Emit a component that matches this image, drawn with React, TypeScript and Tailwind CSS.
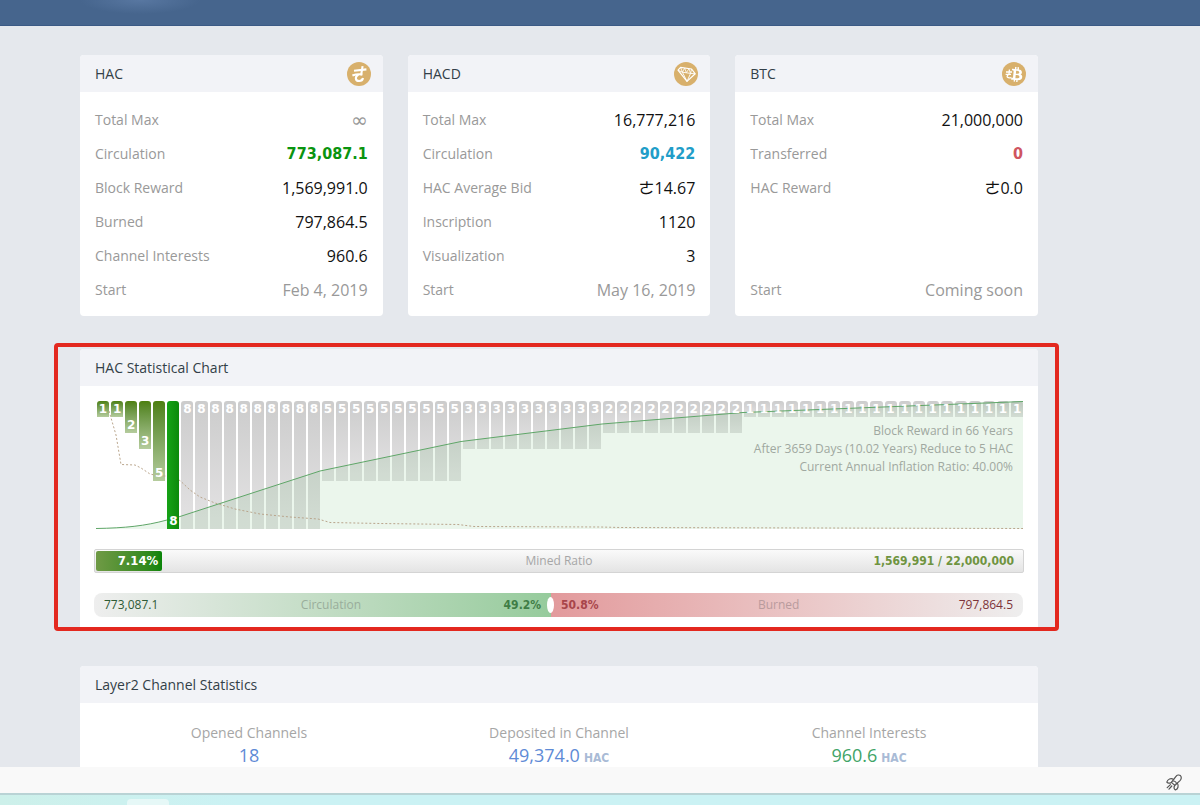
import type { ReactNode } from "react";
import clsx from "clsx";
import { FaBtc } from "react-icons/fa";

type Row = { label: string; value: string; tone?: string } | null;

const muted = "text-[#999999]";

const hacRows: Row[] = [
  { label: "Total Max", value: "∞", tone: "text-[#999999] font-['DejaVu_Sans',sans-serif] text-xl" },
  { label: "Circulation", value: "773,087.1", tone: "font-bold text-[#0a940f]" },
  { label: "Block Reward", value: "1,569,991.0" },
  { label: "Burned", value: "797,864.5" },
  { label: "Channel Interests", value: "960.6" },
  { label: "Start", value: "Feb 4, 2019", tone: muted },
];

const hacdRows: Row[] = [
  { label: "Total Max", value: "16,777,216" },
  { label: "Circulation", value: "90,422", tone: "font-bold text-[#219dc8]" },
  { label: "HAC Average Bid", value: "ㄜ14.67" },
  { label: "Inscription", value: "1120" },
  { label: "Visualization", value: "3" },
  { label: "Start", value: "May 16, 2019", tone: muted },
];

const btcRows: Row[] = [
  { label: "Total Max", value: "21,000,000" },
  { label: "Transferred", value: "0", tone: "font-bold text-[#cf5560]" },
  { label: "HAC Reward", value: "ㄜ0.0" },
  null,
  null,
  { label: "Start", value: "Coming soon", tone: muted },
];

// block reward per year, 66 years
const rewards: number[] = [
  1, 1, 2, 3, 5, 8,
  ...Array(10).fill(8),
  ...Array(10).fill(5),
  ...Array(10).fill(3),
  ...Array(10).fill(2),
  ...Array(20).fill(1),
];
const currentYear = 5;

function HacIcon() {
  return (
    <svg viewBox="0 0 24 24" className="size-6" aria-hidden="true">
      <circle cx="12" cy="12" r="12" fill="#d8b06c" />
      <g fill="none" stroke="#fff" strokeWidth="2.1">
        <path d="M7 8.8 L19.4 7.4" />
        <path d="M15.6 4.2 L14.2 12.6" />
        <path d="M5.4 13.6 C8.5 12.4 12 12 15.4 12.6" />
        <path d="M11.4 12.6 C7.4 15 8.4 19 12.2 19 C14.2 19 15.6 18 16 16" />
      </g>
    </svg>
  );
}

function HacdIcon() {
  return (
    <svg viewBox="0 0 24 24" className="size-6" aria-hidden="true">
      <circle cx="12" cy="12" r="12" fill="#d8b06c" />
      <g fill="none" stroke="#fff" strokeWidth="1.2" strokeLinejoin="round">
        <path d="M4 8.2 L6.6 5.4 L17.6 7 L21.2 11.8 L13 19.4 Z" />
        <path d="M4 8.2 L8.4 10.2 L16.6 11.4 L21.2 11.8" strokeWidth="0.9" />
        <path d="M8.4 10.2 L13 19.4 L16.6 11.4" strokeWidth="0.9" />
        <path d="M6.6 5.4 L8.4 10.2 L10.6 6.2 L12.4 10.6 L15 6.8 L16.6 11.4 L17.6 7" strokeWidth="0.8" />
      </g>
    </svg>
  );
}

function BtcIcon() {
  return (
    <span className="relative flex size-6 items-center justify-end rounded-full bg-[#d8b06c] pr-[3px] text-white" aria-hidden="true">
      <FaBtc className="h-[15px] w-3 rotate-6" />
      <svg viewBox="0 0 8 10" className="absolute top-[7px] left-[3px] h-[10px] w-2" fill="none" stroke="#fff" strokeWidth="1.3">
        <path d="M1 3 H7 M4.4 0.5 L4 5 M0.6 5.4 H6 M3.4 5.4 C0.6 8 3 9.6 6.4 8.6" />
      </svg>
    </span>
  );
}

function RocketIcon() {
  return (
    <svg viewBox="0 0 16 17" className="h-[17px] w-4" fill="none" stroke="#555" strokeWidth="1.2" strokeLinecap="round" strokeLinejoin="round" aria-hidden="true">
      <path d="M5.4 8.4 L9.8 2.6 C11 1 13.2 0.8 14.4 1.6 C15.6 2.8 15.6 5 14 6.6 L8.8 11.4 Z" />
      <path d="M7.6 5.4 C5 3.8 1.6 5 0.8 8.2 C2 9.6 4 9.2 5.4 8.4" />
      <path d="M11.4 9.2 C13 12 12 15 9.4 16 C8 15 7.8 13 8.8 11.4" />
      <path d="M7.4 7 C9 7 10.4 8.4 10.4 9.8" />
      <path d="M4.4 10.6 L1.2 13.6 M5.8 12 L3 15.2" />
    </svg>
  );
}

function CardHeader({ title, icon }: { title: string; icon?: ReactNode }) {
  return (
    <header className="flex h-[37px] items-center justify-between bg-[#f2f3f7] pt-px pr-3 pl-[15px]">
      <h2 className="text-sm text-[#333f48]">{title}</h2>
      {icon}
    </header>
  );
}

function StatCard({ title, icon, rows }: { title: string; icon: ReactNode; rows: Row[] }) {
  return (
    <section className="overflow-hidden rounded-sm bg-white">
      <CardHeader title={title} icon={icon} />
      <dl className="px-[15px] py-[10px]">
        {rows.map((row, i) => (
          <div key={i} className="flex h-[34px] items-center justify-between pt-px">
            {row && (
              <>
                <dt className="text-sm text-[#999999]">{row.label}</dt>
                <dd
                  className={clsx(
                    !row.tone?.includes("text-xl") && "text-base",
                    row.tone ?? "text-[#111111]",
                    row.tone?.includes("font-bold") && "font-['DejaVu_Sans_Condensed','DejaVu_Sans',sans-serif]",
                  )}
                >
                  {row.value}
                </dd>
              </>
            )}
          </div>
        ))}
      </dl>
    </section>
  );
}

function RewardChart() {
  return (
    <div className="relative h-32">
      <div className="flex h-full items-start">
        {rewards.map((reward, i) => {
          const current = i === currentYear;
          const past = i < currentYear;
          return (
            <div key={i} className="h-full flex-1 pl-[2px]">
              <div
                className={clsx(
                  "flex justify-center rounded-t-[3px] pt-px",
                  past && "items-end bg-linear-to-b from-[#4d800d] to-[#b5cc9d]",
                  current && "relative z-10 items-end bg-linear-to-r from-[#17a317] to-[#0c8a0c]",
                  !past && !current && "bg-linear-to-b from-[#cccccc] to-[#e4e3e4]",
                )}
                style={{ height: `${(reward / 8) * 100}%` }}
              >
                <span className="relative z-10 font-['DejaVu_Sans',sans-serif] text-xs leading-[15px] font-bold text-white">
                  {reward}
                </span>
              </div>
            </div>
          );
        })}
      </div>
      <svg viewBox="0 0 928 128" preserveAspectRatio="none" className="absolute inset-0 size-full" aria-hidden="true">
        <path
          d="M1 127.5 C30 127 50 125 72 119 L85 115.5 L225 70 L366 40.5 L507 23 L648 11.5 L928 0.5 V128 H1 Z"
          fill="#3aa544"
          fillOpacity="0.1"
        />
        <path
          d="M1 127.5 C30 127 50 125 72 119 L85 115.5 L225 70 L366 40.5 L507 23 L648 11.5 L928 0.5"
          fill="none"
          stroke="#5fa668"
        />
        <path
          d="M14 10 L21 34 L26 63.5 L40 64 L46 67 L55 73 L64 75 L72 75 L85 79.5 L95 89 L105 96 L120 102 L140 108 L165 113 L195 116 L223 118 L235 121.5 L285 122.5 L363 123.5 L379 125.5 L505 126 L525 126.5 L928 127.5"
          fill="none"
          stroke="#b9a58c"
          strokeDasharray="2 2"
        />
      </svg>
      <div className="absolute top-[21px] right-[10px] z-10 text-right text-xs leading-[18px] text-[#a0a8a0]">
        <p>Block Reward in 66 Years</p>
        <p>After 3659 Days (10.02 Years) Reduce to 5 HAC</p>
        <p>Current Annual Inflation Ratio: 40.00%</p>
      </div>
    </div>
  );
}

function MinedBar() {
  return (
    <div className="relative -mx-px mt-5 flex h-6 items-center justify-end rounded-xs border border-[#d4d4d4] bg-linear-to-b from-[#fafafa] to-[#e4e4e4] px-[9px] text-xs">
      <div className="absolute inset-y-px left-px flex w-[7.14%] items-center justify-end rounded-xs bg-linear-to-r from-[#6f9a45] to-[#088408] pr-1 font-['DejaVu_Sans_Condensed','DejaVu_Sans',sans-serif] text-[13px] font-bold text-white">
        7.14%
      </div>
      <span className="absolute inset-x-0 text-center text-[#a6a6a6]">Mined Ratio</span>
      <span className="font-['DejaVu_Sans_Condensed','DejaVu_Sans',sans-serif] font-bold text-[#6f9440]">
        1,569,991 / 22,000,000
      </span>
    </div>
  );
}

function SupplyBar() {
  return (
    <div className="mt-5 -ml-px flex h-6 overflow-hidden rounded-lg text-xs">
      <div className="relative flex w-[49.2%] items-center justify-between bg-linear-to-r from-[#eeeeee] to-[#96cb9c] px-[10px]">
        <span className="text-[#2e5a35]">773,087.1</span>
        <span className="text-[#99ad9b]">Circulation</span>
        <strong className="font-['DejaVu_Sans_Condensed','DejaVu_Sans',sans-serif] text-[#3f7d46]">49.2%</strong>
        <i className="absolute top-1 -right-[3px] z-10 h-4 w-[7px] rounded-[50%] bg-white" />
      </div>
      <div className="flex flex-1 items-center justify-between bg-linear-to-r from-[#e29a9c] to-[#eeeeee] px-[10px]">
        <strong className="font-['DejaVu_Sans_Condensed','DejaVu_Sans',sans-serif] text-[#a8454a]">50.8%</strong>
        <span className="text-[#b99b9d]">Burned</span>
        <span className="text-[#7d3338]">797,864.5</span>
      </div>
    </div>
  );
}

function ChannelStat({ label, value, unit, tone }: { label: string; value: string; unit?: string; tone: string }) {
  return (
    <div className="text-center">
      <dt className="text-sm leading-6 text-[#a6a6a6]">{label}</dt>
      <dd className={clsx("text-lg leading-5", tone)}>
        {value}
        {unit && (
          <small className="ml-1 font-['DejaVu_Sans_Condensed','DejaVu_Sans',sans-serif] text-xs font-bold text-[#a9bbd6]">
            {unit}
          </small>
        )}
      </dd>
    </div>
  );
}

export default function App() {
  return (
    <div className="flex h-screen flex-col overflow-hidden bg-[#e5e8ed] font-['Open_Sans','Noto_Sans_CJK_TC',sans-serif]">
      <div className="h-[26px] shrink-0 border-b border-[#3b5a85] bg-[#46658d] bg-[radial-gradient(ellipse_60px_14px_at_140px_0px,#5877a1,transparent)]" />

      <main className="min-h-0 flex-1 overflow-hidden pt-[29px] pr-[162px] pl-20">
        <div className="grid grid-cols-3 gap-[25px]">
          <StatCard title="HAC" icon={<HacIcon />} rows={hacRows} />
          <StatCard title="HACD" icon={<HacdIcon />} rows={hacdRows} />
          <StatCard title="BTC" icon={<BtcIcon />} rows={btcRows} />
        </div>

        <div className="mt-[27px] -mr-[21px] -ml-[26px] rounded-sm border-4 border-[#e3281f] pt-[2px] pr-[17px] pl-[22px]">
          <section className="overflow-hidden rounded-t-sm bg-white">
            <CardHeader title="HAC Statistical Chart" />
            <div className="px-[15px] pt-[15px] pb-[10px]">
              <RewardChart />
              <MinedBar />
              <SupplyBar />
            </div>
          </section>
        </div>

        <section className="mt-[35px] overflow-hidden rounded-sm bg-white">
          <CardHeader title="Layer2 Channel Statistics" />
          <dl className="grid grid-cols-3 px-[14px] pt-[18px] pb-6">
            <ChannelStat label="Opened Channels" value="18" tone="text-[#5f8bd6]" />
            <ChannelStat label="Deposited in Channel" value="49,374.0" unit="HAC" tone="text-[#5f8bd6]" />
            <ChannelStat label="Channel Interests" value="960.6" unit="HAC" tone="text-[#41a467]" />
          </dl>
        </section>
      </main>

      <footer className="shrink-0">
        <div className="flex h-7 items-center justify-end border-b-2 border-[#b9d3d5] bg-[#f9f9f9] pt-1 pr-[18px]">
          <RocketIcon />
        </div>
        <div className="flex h-[10px] items-end bg-linear-to-r from-[#cdf0ea] to-[#cbf2f4] to-20% pl-[127px]">
          <div className="h-[6px] w-[42px] rounded-t-sm bg-[#e6f8f7]" />
        </div>
      </footer>
    </div>
  );
}
